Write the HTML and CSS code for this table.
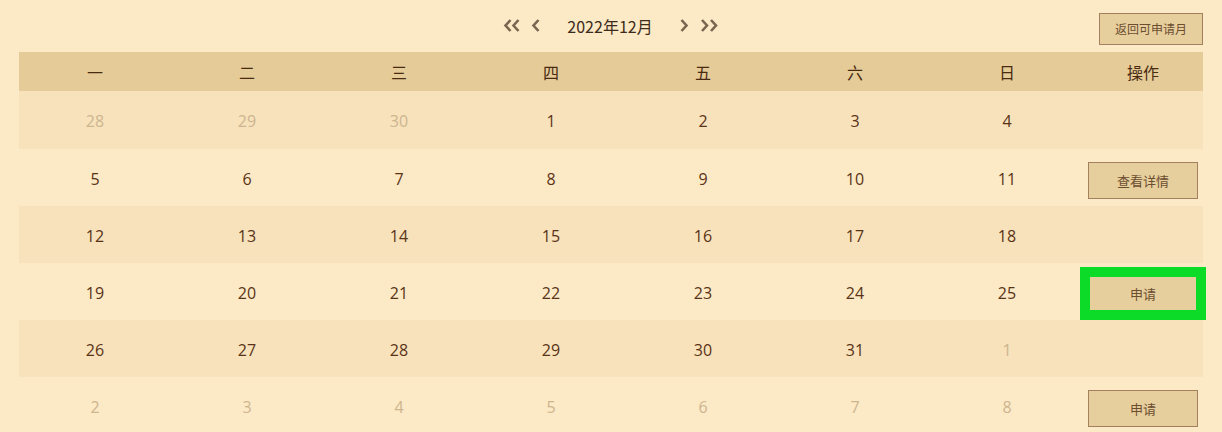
FILE: index.html
```html
<!DOCTYPE html>
<html lang="zh">
<head>
<meta charset="utf-8">
<link rel="stylesheet" href="styles.css">
</head>
<body>
<div class="page">
  <div class="topbar">
    <div></div>
    <div class="nav">
      <svg class="ic dbl" width="18" height="13" viewBox="0 0 18 13"><polyline points="7.5,1 2.5,6.5 7.5,12"/><polyline points="15.5,1 10.5,6.5 15.5,12"/></svg>
      <svg class="ic sgl" width="9" height="13" viewBox="0 0 9 13"><polyline points="7.5,1 2.5,6.5 7.5,12"/></svg>
      <span class="month">2022年12月</span>
      <svg class="ic sgl" width="9" height="13" viewBox="0 0 9 13"><polyline points="1.5,1 6.5,6.5 1.5,12"/></svg>
      <svg class="ic dbl" width="19" height="13" viewBox="0 0 19 13"><polyline points="2,1 7,6.5 2,12"/><polyline points="11,1 16,6.5 11,12"/></svg>
    </div>
    <div class="right"><button class="btn back">返回可申请月</button></div>
  </div>

  <div class="cal">
    <div class="row head">
      <div>一</div><div>二</div><div>三</div><div>四</div><div>五</div><div>六</div><div>日</div><div>操作</div>
    </div>
    <div class="row odd first">
      <div class="off">28</div><div class="off">29</div><div class="off">30</div><div>1</div><div>2</div><div>3</div><div>4</div><div class="act"></div>
    </div>
    <div class="row">
      <div>5</div><div>6</div><div>7</div><div>8</div><div>9</div><div>10</div><div>11</div><div class="act"><button class="btn op">查看详情</button></div>
    </div>
    <div class="row odd">
      <div>12</div><div>13</div><div>14</div><div>15</div><div>16</div><div>17</div><div>18</div><div class="act"></div>
    </div>
    <div class="row">
      <div>19</div><div>20</div><div>21</div><div>22</div><div>23</div><div>24</div><div>25</div><div class="act act4"><span class="hl"><button class="btn op">申请</button></span></div>
    </div>
    <div class="row odd">
      <div>26</div><div>27</div><div>28</div><div>29</div><div>30</div><div>31</div><div class="off">1</div><div class="act"></div>
    </div>
    <div class="row">
      <div class="off">2</div><div class="off">3</div><div class="off">4</div><div class="off">5</div><div class="off">6</div><div class="off">7</div><div class="off">8</div><div class="act"><button class="btn op">申请</button></div>
    </div>
  </div>
</div>
</body>
</html>
```

FILE: styles.css
```css
html, body {
  margin: 0;
  padding: 0;
  background: #fce9c5;
  overflow: hidden;
}
body {
  font-family: "Open Sans", "Noto Sans CJK SC", sans-serif;
  color: #5a3317;
}
.page {
  padding: 0 19px;
}
.topbar {
  display: grid;
  grid-template-columns: 1fr auto 1fr;
  align-items: center;
  height: 52px;
}
.right {
  display: flex;
  justify-content: flex-end;
}
.nav {
  display: flex;
  align-items: center;
  height: 52px;
  padding-bottom: 1px;
  box-sizing: border-box;
}
.ic {
  display: block;
  fill: none;
  stroke: #7a6550;
  stroke-width: 2.6;
}
.nav .dbl:first-child { margin-right: 10px; }
.nav .sgl:nth-child(2) { margin-right: 27px; }
.nav .sgl:nth-child(4) { margin-left: 27px; margin-right: 11px; }
.month {
  font-family: "Noto Sans CJK SC", sans-serif;
  font-size: 16px;
  color: #3d2b1c;
}
.btn {
  font-family: "Noto Sans CJK SC", sans-serif;
  background: #e7cf9d;
  border: 1px solid #a3805e;
  color: #6b4d30;
  padding: 0;
  margin: 0;
  box-sizing: border-box;
  cursor: pointer;
}
.back {
  width: 104px;
  height: 32px;
  font-size: 12px;
  margin-top: 5px;
}
.op {
  width: 110px;
  height: 37px;
  font-size: 13px;
  display: block;
}
.cal {
  width: 1184px;
}
.row {
  display: grid;
  grid-template-columns: repeat(7, 152px) 120px;
  height: 57px;
  align-items: center;
  justify-items: center;
  font-size: 16px;
}
.row > div {
  text-align: center;
  padding-top: 2px;
}
.row.head {
  height: 39px;
  background: #e4cb98;
  color: #4a2b12;
  font-family: "Noto Sans CJK SC", sans-serif;
  font-size: 16px;
}
.row.head > div { padding-top: 0; }
.row.first { height: 58px; }
.row.odd { background: #f7e2bb; }
.off { color: #cdb590; }
.row > .act {
  align-self: start;
  padding-top: 13px;
}
.row > .act4 { padding-top: 12px; }
.hl {
  position: relative;
  display: block;
}
.hl::after {
  content: "";
  position: absolute;
  left: -8px;
  top: -8px;
  right: -8px;
  bottom: -8px;
  border: 10px solid #0cdb27;
  pointer-events: none;
}
```
